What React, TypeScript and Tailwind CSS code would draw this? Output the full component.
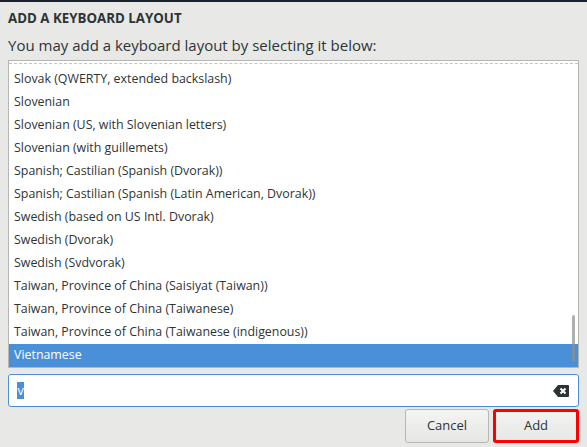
const layouts = [
  "Slovak (QWERTY, extended backslash)",
  "Slovenian",
  "Slovenian (US, with Slovenian letters)",
  "Slovenian (with guillemets)",
  "Spanish; Castilian (Spanish (Dvorak))",
  "Spanish; Castilian (Spanish (Latin American, Dvorak))",
  "Swedish (based on US Intl. Dvorak)",
  "Swedish (Dvorak)",
  "Swedish (Svdvorak)",
  "Taiwan, Province of China (Saisiyat (Taiwan))",
  "Taiwan, Province of China (Taiwanese)",
  "Taiwan, Province of China (Taiwanese (indigenous))",
  "Vietnamese",
];

function ClearIcon() {
  return (
    <svg width="16" height="12" viewBox="0 0 16 12">
      <path d="M5 0 H15 a1 1 0 0 1 1 1 V11 a1 1 0 0 1 -1 1 H5 L0 6 Z" fill="#2e3436" />
      <path d="M7.5 3.5 L12.5 8.5 M12.5 3.5 L7.5 8.5" stroke="#fff" strokeWidth="2" />
    </svg>
  );
}

export default function App() {
  return (
    <div className="w-[587px] h-[447px] bg-[#e8e8e7] text-[#2e3436] font-['Open_Sans',sans-serif] flex flex-col overflow-hidden">
      <div className="h-[2px] bg-[#1b2330]" />

      {/* Header */}
      <div className="px-2 pt-[8px] text-[13.3px] font-bold leading-[16px]">ADD A KEYBOARD LAYOUT</div>
      <div className="px-2 pt-[9px] text-[15px] leading-[20px]">You may add a keyboard layout by selecting it below:</div>

      {/* List */}
      <div className="relative ml-2 mr-2 mt-[5px] h-[308px] border border-[#b6b6b3] bg-white flex flex-col justify-end overflow-hidden">
        <div className="absolute left-0 right-0 top-[2px] border-t border-dashed border-[#c4c4c2]" />
        {layouts.map((name, i) => {
          const selected = i === layouts.length - 1;
          return (
            <div
              key={name}
              className={
                "h-[23px] shrink-0 flex items-center px-[5px] text-[12.4px] whitespace-nowrap " +
                (selected ? "bg-[#4a90d9] text-white" : "")
              }
            >
              {name}
            </div>
          );
        })}
        <div className="absolute right-[3px] bottom-[5px] w-[3px] h-[47px] rounded-full bg-[#8c8f8d] opacity-70" />
      </div>

      {/* Entry */}
      <div className="mx-2 mt-[6px] h-[33px] border border-[#4a90d9] rounded-[3px] bg-white flex items-center pl-[8px] pr-[9px]">
        <span className="bg-[#4a90d9] text-white text-[12.5px] leading-[17px] px-[0.5px]">v</span>
        <div className="flex-1" />
        <ClearIcon />
      </div>

      {/* Buttons */}
      <div className="flex justify-end gap-[4px] mr-2 mt-[2px]">
        <button className="w-[84px] h-[34px] rounded-[3px] border border-[#b6b6b3] bg-gradient-to-b from-[#f4f4f3] to-[#e6e6e5] text-[13px]">
          Cancel
        </button>
        <button className="w-[86px] h-[34px] rounded-[3px] border border-[#b6b6b3] bg-gradient-to-b from-[#f4f4f3] to-[#e6e6e5] text-[13px] outline-[3px] outline-[#ff0000] -outline-offset-[3px]">
          Add
        </button>
      </div>
    </div>
  );
}
